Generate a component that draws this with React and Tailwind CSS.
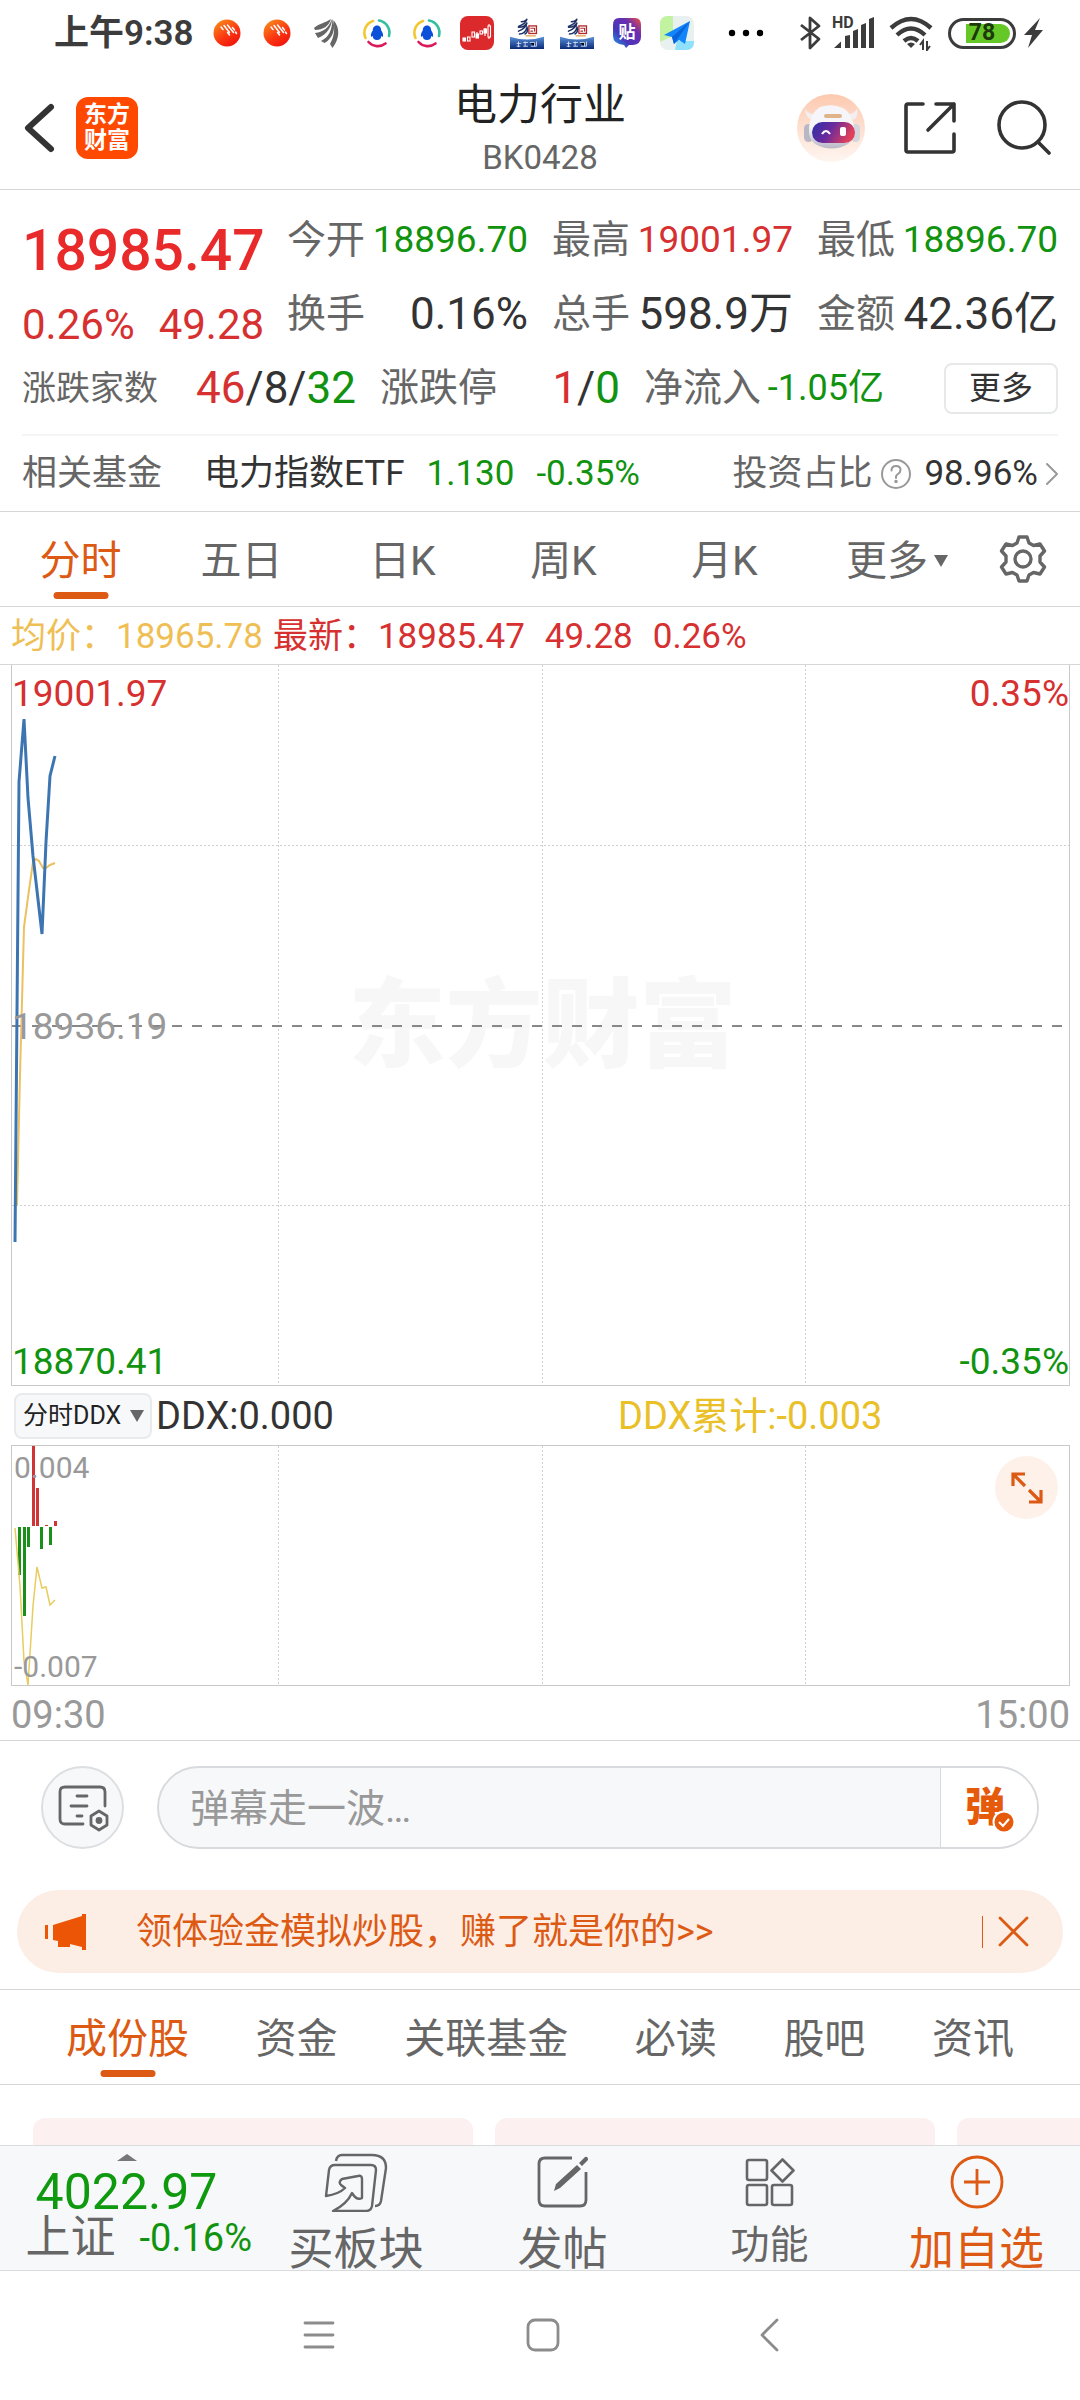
import React, { useState } from "react";

const RED = "text-[#d63031]";
const GREEN = "text-[#11930f]";

/* ---------- status bar icons ---------- */

function OrangeBall({ id }) {
  return (
    <svg viewBox="0 0 34 34" className="size-[34px]" aria-hidden="true">
      <defs>
        <linearGradient id={id} x1="0" y1="0" x2="0.7" y2="1">
          <stop offset="0" stopColor="#f79a1c" />
          <stop offset="0.6" stopColor="#fb3a12" />
          <stop offset="1" stopColor="#f0140c" />
        </linearGradient>
      </defs>
      <circle cx="17" cy="17" r="13.5" fill={`url(#${id})`} />
      <g stroke="#fff" strokeWidth="1.500" strokeLinecap="round" fill="none">
        <path d="M11 11l2 2.500M14 9.500l5.500 7M17.500 9l6 7.500M17.500 16.500l2 2.500M22.500 11.500l2 2.500M25.500 16l1 1.500" />
      </g>
    </svg>
  );
}

function WingIcon() {
  return (
    <svg viewBox="0 0 34 34" className="size-[34px]" aria-hidden="true">
      <g fill="#666">
        <path d="M4 12c6-5 11-5 17-9-2 7-8 11-16 11z" />
        <path d="M5 17c9-1 14-6 17-14C22 10 17 19 8 22z" />
        <path d="M11 25c8-4 11-11 11.500-22 4 9 0 20-8 24z" />
        <path d="M20 28c4-7 5-14 3.500-24 7 8 6 19-1 28z" />
      </g>
    </svg>
  );
}

function PenguinRing() {
  return (
    <svg viewBox="0 0 34 34" className="size-[34px]" aria-hidden="true">
      <g fill="none" strokeWidth="2.600" strokeLinecap="round">
        <path d="M5.500 22A12.500 12.500 0 0 1 13 5" stroke="#f2c832" />
        <path d="M19 4.500A12.500 12.500 0 0 1 29 20" stroke="#35bfa0" />
        <path d="M8.500 26a12.500 12.500 0 0 0 17 1.500" stroke="#dc1a5b" />
      </g>
      <path d="M17 9.500c-3 0-4.200 2.500-4.200 5-1.500 2-2.500 4.500-1.500 6.500l1.500-1c0 2.500 1.500 4 4.200 4s4.200-1.500 4.200-4l1.500 1c1-2 0-4.500-1.500-6.500 0-2.500-1.200-5-4.200-5z" fill="#0a50d8" />
    </svg>
  );
}

function CandleApp() {
  return (
    <svg viewBox="0 0 34 34" className="size-[34px]" aria-hidden="true">
      <rect width="34" height="34" rx="8" fill="#dc2a2c" />
      <g stroke="#fff" strokeWidth="1.100" fill="none">
        <rect x="3" y="22" width="2.500" height="3" fill="#fff" />
        <rect x="7.500" y="21" width="2.500" height="4" />
        <rect x="12" y="16" width="2.500" height="5" />
        <rect x="16" y="18" width="2.500" height="4" fill="#fff" />
        <rect x="20" y="15" width="2.500" height="3" />
        <rect x="24" y="13" width="2.500" height="4" fill="#fff" />
        <rect x="28" y="10" width="2.500" height="11" />
        <path d="M29 8v2M29 21v2M17 16v2M25 12v8" />
      </g>
    </svg>
  );
}

function SecuritiesApp({ id }) {
  return (
    <svg viewBox="0 0 36 34" className="h-[34px] w-[34px]" aria-hidden="true">
      <defs>
        <linearGradient id={id} x1="0" y1="0" x2="0" y2="1">
          <stop offset="0" stopColor="#5a90d8" />
          <stop offset="1" stopColor="#0b2a78" />
        </linearGradient>
      </defs>
      <path d="M0 21q18 6 36 0v13H0z" fill={`url(#${id})`} />
      <g fill="none" strokeLinecap="round">
        <path d="M12 5q5 0 6-3-1 5-9 8M9 11q7 0 9-5-1 6-9 9M10 18q6 0 8-7 2 4-2 7" stroke="#1c2f66" strokeWidth="1.600" />
        <rect x="20" y="9.500" width="8" height="8" stroke="#b02a2c" strokeWidth="1.400" />
        <path d="M22 12h4M22 15h2M26 12v3" stroke="#b02a2c" strokeWidth="1.200" />
        <path d="M17 20h10" stroke="#e0a04a" strokeWidth="1.200" />
      </g>
      <path d="M7 28h5M9 26v6M14 27h5M16 26v5M21 27h5v4M28 26v5M7 31h4M14 31h5M22 31h6" stroke="#dfe9fb" strokeWidth="0.900" />
    </svg>
  );
}

function ForumApp() {
  return (
    <svg viewBox="0 0 34 34" className="size-[34px]" aria-hidden="true">
      <defs>
        <linearGradient id="forum" x1="0" y1="1" x2="1" y2="0">
          <stop offset="0" stopColor="#18a8ef" />
          <stop offset="0.35" stopColor="#4a35b8" />
          <stop offset="0.7" stopColor="#6b2fb0" />
          <stop offset="1" stopColor="#f0503c" />
        </linearGradient>
      </defs>
      <path d="M9 2h16q6 0 6 7v12q0 7-8 8h-4l-3 3-2-3Q3 28 3 20V9q0-7 6-7z" fill="url(#forum)" />
      <text x="17" y="22" textAnchor="middle" fontSize="17" fontWeight="700" fill="#fff" className="font-['Noto_Sans_CJK_SC',sans-serif]">贴</text>
    </svg>
  );
}

function PlaneApp() {
  return (
    <svg viewBox="0 0 34 34" className="size-[34px]" aria-hidden="true">
      <rect width="34" height="34" rx="8" fill="#e8f0f0" />
      <path d="M8 0h5v20L0 26V8q0-8 8-8z" fill="#c2f3a0" />
      <path d="M17 25h17v1q0 8-8 8H15z" fill="#8fe0fb" />
      <path d="M30 5L4 19l8 2 2 7 5-4 6 4z" fill="#1186fb" />
      <path d="M30 5L12 21l2 7z" fill="#0a63d8" />
    </svg>
  );
}

function StatusBar() {
  return (
    <div className="flex h-[66px] items-center pr-9 pl-[54px] text-[#3c3c3c]">
      <span className="w-[156px] pt-0.5 text-[35px] leading-[40px] font-semibold whitespace-nowrap">上午9:38</span>
      <div className="flex items-center gap-4">
        <OrangeBall id="ball-a" />
        <OrangeBall id="ball-b" />
        <WingIcon />
        <PenguinRing />
        <PenguinRing />
        <CandleApp />
        <SecuritiesApp id="sec-a" />
        <SecuritiesApp id="sec-b" />
        <ForumApp />
        <PlaneApp />
      </div>
      <svg viewBox="0 0 36 8" className="ml-[34px] h-2 w-9" fill="#000" aria-hidden="true">
        <circle cx="4" cy="4" r="3.200" />
        <circle cx="18" cy="4" r="3.200" />
        <circle cx="32" cy="4" r="3.200" />
      </svg>
      <div className="ml-auto flex items-center">
        <svg viewBox="0 0 22 36" className="h-9 w-[22px]" fill="none" stroke="#3c3c3c" strokeWidth="2.800" strokeLinejoin="round" aria-hidden="true">
          <path d="M2 10l18 14-9 9V3l9 8L2 25" />
        </svg>
        <svg viewBox="0 -4 44 44" className="ml-[11px] h-11 w-11" fill="#3c3c3c" aria-hidden="true">
          <text x="0" y="13" fontSize="16" fontWeight="700" className="font-[Roboto,sans-serif]">HD</text>
          <path d="M2 33l7-6.500V33zM13 21l5-1v13h-5zM21 16l5-2v19h-5zM29 10l5-2v25h-5zM37 4l5-2v31h-5z" />
        </svg>
        <svg viewBox="0 0 44 36" className="ml-[13px] h-9 w-11" fill="none" stroke="#3c3c3c" strokeWidth="4.400" aria-hidden="true">
          <path d="M2 13Q22-5 42 13M8 20Q22 7 36 20M15 26Q22 20 29 26" />
          <path d="M18 29q4-3 8 0l-4 4z" fill="#3c3c3c" stroke="none" />
          <path d="M34 35v-9l-3 4M38 26v9l3-4" strokeWidth="2" />
        </svg>
        <span className="ml-[15px] flex h-[31px] w-[68px] items-center rounded-full border-[3px] border-[#3c3c3c] pr-[3px] pl-[15px]">
          <span className="flex h-[19px] flex-1 items-center justify-center rounded-l-sm rounded-r-full bg-[#66c827] pr-3 text-[23px] leading-[20px] font-bold text-[#1c3a0b]">78</span>
        </span>
        <svg viewBox="0 0 20 30" className="ml-2 h-[30px] w-5" fill="#3c3c3c" aria-hidden="true">
          <path d="M16 0L0 17h8L4 30l15-18h-8z" />
        </svg>
      </div>
    </div>
  );
}

/* ---------- header ---------- */

function Robot() {
  return (
    <svg viewBox="0 0 68 68" className="size-[68px]" aria-hidden="true">
      <defs>
        <linearGradient id="robot-bg" x1="0" y1="0" x2="0" y2="1">
          <stop offset="0" stopColor="#fdc9af" />
          <stop offset="1" stopColor="#fef6f1" />
        </linearGradient>
        <linearGradient id="robot-face" x1="0" y1="0" x2="1" y2="0.3">
          <stop offset="0" stopColor="#2b2fa8" />
          <stop offset="0.5" stopColor="#6b2a9c" />
          <stop offset="1" stopColor="#e0405c" />
        </linearGradient>
        <linearGradient id="robot-head" x1="0" y1="0" x2="0" y2="1">
          <stop offset="0.5" stopColor="#f6f5f9" />
          <stop offset="1" stopColor="#b9b8c6" />
        </linearGradient>
      </defs>
      <circle cx="34" cy="34" r="34" fill="url(#robot-bg)" />
      <path d="M8 15q0 8 7 11l4-6q-7 1-11-5zM60 14q2 9-4 12l-5-6q7 0 9-6z" fill="#f3eef0" />
      <rect x="7" y="30" width="9" height="18" rx="4.500" fill="#b8b8c4" />
      <rect x="54" y="30" width="9" height="18" rx="4.500" fill="#d5d5de" />
      <path d="M23 13q12-4 23 1 9 5 11 19 1 13-6 17-16 9-33 0-7-5-6-17 2-15 11-20z" fill="url(#robot-head)" />
      <rect x="27" y="20" width="18" height="4" rx="2" fill="#e0b48a" />
      <rect x="15" y="28" width="43" height="21" rx="10.500" fill="url(#robot-face)" />
      <path d="M25 40q4-6 8 0" stroke="#fff" strokeWidth="2.200" fill="none" />
      <rect x="43" y="33" width="6" height="9" rx="2" fill="#fff" />
    </svg>
  );
}

function Header() {
  return (
    <header className="grid h-[124px] grid-cols-[1fr_auto_1fr] items-center border-b border-[#d6d6d6] px-[26px]">
      <div className="-ml-1 flex items-center gap-[19px]">
        <button type="button" aria-label="返回">
          <svg viewBox="0 0 35 56" className="h-14 w-[35px]" fill="none" stroke="#333" strokeWidth="6" strokeLinecap="round" strokeLinejoin="round" aria-hidden="true">
            <path d="M29 7L6 28l23 21" />
          </svg>
        </button>
        <a href="#home" className="flex size-[62px] flex-col items-center justify-center rounded-xl bg-[#ff4800] text-[23px] leading-[26px] font-bold text-white">
          <span>东方</span>
          <span>财富</span>
        </a>
      </div>
      <div className="pt-[3px] text-center">
        <h1 className="text-[43px] leading-[58px] text-[#222]">电力行业</h1>
        <p className="text-[33px] leading-[48px] text-[#666]">BK0428</p>
      </div>
      <div className="flex items-center justify-end">
        <button type="button" aria-label="智能助手"><Robot /></button>
        <button type="button" aria-label="分享" className="ml-[37px]">
          <svg viewBox="0 0 56 56" className="size-14" fill="none" stroke="#333" strokeWidth="3.600" strokeLinecap="round" strokeLinejoin="round" aria-hidden="true">
            <path d="M21 4H6q-2 0-2 2v44q0 2 2 2h44q2 0 2-2V34M34 4h18v17M52 4L26 30" />
          </svg>
        </button>
        <button type="button" aria-label="搜索" className="mr-[3px] ml-[37px]">
          <svg viewBox="0 0 56 56" className="size-14" fill="none" stroke="#333" strokeWidth="3.600" strokeLinecap="round" aria-hidden="true">
            <circle cx="27" cy="25" r="23" />
            <path d="M43 42l11 11" />
          </svg>
        </button>
      </div>
    </header>
  );
}

/* ---------- quote ---------- */

function Stat({ label, value, className }) {
  return (
    <div className="flex h-[74px] items-center justify-between whitespace-nowrap">
      <dt className="text-[39px] leading-[50px] text-[#666]">{label}</dt>
      <dd className={className}>{value}</dd>
    </div>
  );
}

function Quote() {
  return (
    <section className="border-b border-[#d6d6d6] pt-[13px]">
      <div className="flex px-[22px]">
        <div className="w-[265px] whitespace-nowrap">
          <p className="flex h-24 items-center text-[57px] leading-[70px] font-medium text-[#e92a2a]">18985.47</p>
          <p className={`flex h-[52px] items-center gap-6 text-[42px] leading-[52px] ${RED}`}>
            <span>0.26%</span>
            <span>49.28</span>
          </p>
        </div>
        <dl className="grid flex-1 grid-cols-3 gap-x-6">
          <Stat label="今开" value="18896.70" className={`text-[37px] leading-[50px] ${GREEN}`} />
          <Stat label="最高" value="19001.97" className={`text-[37px] leading-[50px] ${RED}`} />
          <Stat label="最低" value="18896.70" className={`text-[37px] leading-[50px] ${GREEN}`} />
          <Stat label="换手" value="0.16%" className="text-[44px] leading-[50px] text-[#333]" />
          <Stat label="总手" value="598.9万" className="text-[44px] leading-[50px] text-[#333]" />
          <Stat label="金额" value="42.36亿" className="text-[44px] leading-[50px] text-[#333]" />
        </dl>
      </div>
      <div className="grid h-[74px] grid-cols-[334fr_240fr_240fr_150fr] items-center gap-x-6 px-[22px] leading-[50px] whitespace-nowrap">
        <div className="flex items-center justify-between">
          <span className="text-[34px] text-[#666]">涨跌家数</span>
          <span className="text-[44px] text-[#333]">
            <span className={RED}>46</span>/8/<span className={GREEN}>32</span>
          </span>
        </div>
        <div className="flex items-center justify-between">
          <span className="text-[39px] text-[#666]">涨跌停</span>
          <span className="text-[44px] text-[#333]">
            <span className={RED}>1</span>/<span className={GREEN}>0</span>
          </span>
        </div>
        <div className="flex items-center justify-between">
          <span className="text-[39px] text-[#666]">净流入</span>
          <span className={`text-[36px] ${GREEN}`}>-1.05亿</span>
        </div>
        <button type="button" className="h-[51px] w-[114px] justify-self-end rounded-lg border-2 border-[#e6e8ea] text-[32px] leading-[44px] text-[#333]">更多</button>
      </div>
      <div className="mx-[22px] mt-[9px] flex h-[77px] items-center border-t-2 border-[#f5f5f5] text-[35px] leading-[50px] whitespace-nowrap">
        <span className="text-[#666]">相关基金</span>
        <a href="#etf" className="ml-[42px] flex items-center">
          <span className="text-[#333]">电力指数ETF</span>
          <span className={`ml-[22px] ${GREEN}`}>1.130</span>
          <span className={`ml-[22px] ${GREEN}`}>-0.35%</span>
        </a>
        <span className="ml-auto text-[#666]">投资占比</span>
        <svg viewBox="0 0 32 32" className="ml-2 size-8" fill="none" stroke="#999" strokeWidth="2" strokeLinecap="round" aria-hidden="true">
          <circle cx="16" cy="16" r="14" />
          <path d="M11.500 12.500q0-4.500 4.500-4.500t4.500 4q0 2.500-2.500 4t-2 4" />
          <circle cx="16" cy="23.500" r="0.800" fill="#999" />
        </svg>
        <a href="#ratio" className="ml-3 flex items-center text-[#333]">
          98.96%
          <svg viewBox="0 0 12 24" className="ml-2 h-6 w-3" fill="none" stroke="#999" strokeWidth="2" strokeLinecap="round" strokeLinejoin="round" aria-hidden="true">
            <path d="M1 2l10 10L1 22" />
          </svg>
        </a>
      </div>
    </section>
  );
}

/* ---------- chart period tabs ---------- */

const PERIODS = ["分时", "五日", "日K", "周K", "月K"];

function PeriodTabs() {
  const [active, setActive] = useState("分时");
  return (
    <nav className="grid h-[95px] grid-cols-[161fr_161fr_161fr_161fr_161fr_184fr_68fr] border-b border-[#d6d6d6] pr-[23px] text-[41px] leading-[50px] text-[#666]">
      {PERIODS.map((p) => (
        <button
          key={p}
          type="button"
          onClick={() => setActive(p)}
          className={p === active ? "relative pt-[3px] text-[#dc5a14]" : "relative pt-[3px]"}
        >
          {p}
          {p === active && <span className="absolute bottom-[7px] left-1/2 h-[7px] w-[55px] -translate-x-1/2 rounded-full bg-[#dc5a14]" />}
        </button>
      ))}
      <button type="button" className="flex items-center justify-center gap-1.5 pt-[3px] whitespace-nowrap">
        更多
        <svg viewBox="0 0 14 12" className="h-3 w-3.5" fill="#666" aria-hidden="true"><path d="M0 0h14L7 12z" /></svg>
      </button>
      <button type="button" aria-label="设置" className="flex items-center justify-center">
        <svg viewBox="0 0 48 50" className="h-[50px] w-12" fill="none" stroke="#666" strokeWidth="3.400" strokeLinejoin="round" aria-hidden="true">
          <path d="M20 3h8l2 6 4.500 2.500L41 10l4.500 7-4.500 5v6l4.500 5-4.500 7-6.500-1.500L30 41l-2 6h-8l-2-6-4.500-2.500L7 40l-4.500-7L7 28v-6l-4.500-5L7 10l6.500 1.500L18 9z" />
          <circle cx="24" cy="25" r="8" />
        </svg>
      </button>
    </nav>
  );
}

/* ---------- charts ---------- */

function Grid({ height, rows }) {
  return (
    <g stroke="#cfcfcf" strokeWidth="1" strokeDasharray="2 2">
      {[266, 530, 793].map((x) => <path key={x} d={`M${x}.5 0V${height}`} />)}
      {rows.map((y) => <path key={y} d={`M0 ${y}.5H1057`} />)}
    </g>
  );
}

function PriceChart() {
  return (
    <div className="relative mr-2.5 ml-[11px] h-[721px] border-x border-b border-[#c9c9c9] text-[37px] leading-[44px]">
      <span className="absolute top-[311px] left-1/2 -translate-x-1/2 pl-1 text-[97px] leading-[100px] font-black whitespace-nowrap text-[#f7f7f7]">东方财富</span>
      <svg viewBox="0 0 1057 720" preserveAspectRatio="none" className="absolute inset-0 size-full" fill="none" aria-hidden="true">
        <Grid height={720} rows={[180, 540]} />
        <path d="M0 361H1057" stroke="#888" strokeWidth="2" strokeDasharray="10 10" />
        <path d="M5 540L8 410 12 262 17 225 21 197 24 194 27 196 31 203 34 203 38 200 43 198" stroke="#ecc15f" strokeWidth="2" />
        <path d="M3 577L7 117 12 54 16 133 21 191 30 269 34 177 38 111 43 91" stroke="#3d75b2" strokeWidth="3" strokeLinejoin="miter" />
      </svg>
      <span className={`absolute top-[7px] left-0 ${RED}`}>19001.97</span>
      <span className={`absolute top-[7px] right-0 ${RED}`}>0.35%</span>
      <span className="absolute top-[340px] left-0 text-[#999]">18936.19</span>
      <span className={`absolute bottom-px left-0 ${GREEN}`}>18870.41</span>
      <span className={`absolute right-0 bottom-px ${GREEN}`}>-0.35%</span>
    </div>
  );
}

const DDX_BARS = [
  [6, 81, 129, "#1a8f1a"],
  [11, 81, 170, "#1a8f1a"],
  [15, 81, 101, "#1a8f1a"],
  [20, 0, 80, "#d03434"],
  [24, 42, 80, "#d03434"],
  [28, 81, 103, "#1a8f1a"],
  [33, 79, 80, "#d03434"],
  [37, 81, 99, "#1a8f1a"],
  [42, 75, 80, "#d03434"],
];

function DdxChart() {
  return (
    <div className="relative mr-2.5 ml-[11px] h-[241px] border border-[#c9c9c9] text-[30px] leading-[36px] text-[#999]">
      <svg viewBox="0 0 1057 239" preserveAspectRatio="none" className="absolute inset-0 size-full" fill="none" aria-hidden="true">
        <Grid height={239} rows={[]} />
        {DDX_BARS.map(([x, top, bottom, color]) => (
          <rect key={x} x={x} y={top} width="3" height={bottom - top} fill={color} />
        ))}
        <path d="M3 82L8 140 12 215 16 239 21 160 25 121 30 142 34 141 38 159 43 154" stroke="#e8cc5e" strokeWidth="1.500" />
      </svg>
      <span className="absolute top-1 left-0.5">0.004</span>
      <span className="absolute bottom-0 left-0.5">-0.007</span>
      <button type="button" aria-label="全屏" className="absolute top-2.5 right-[11px] flex size-[63px] items-center justify-center rounded-full bg-[#fef1ea]">
        <svg viewBox="0 0 32 32" className="size-8" fill="none" stroke="#dc5a14" strokeWidth="3.200" aria-hidden="true">
          <path d="M2 14V2h12M2 2l12 12M30 18v12H18M30 30L18 18" />
        </svg>
      </button>
    </div>
  );
}

/* ---------- comment bar and banner ---------- */

function CommentBar() {
  return (
    <div className="flex gap-[33px] px-[41px] pt-[25px]">
      <button type="button" aria-label="弹幕设置" className="flex size-[83px] items-center justify-center rounded-full border-2 border-[#dcdfe2] bg-[#f7f8fa]">
        <svg viewBox="0 0 52 50" className="h-[50px] w-[52px]" fill="none" stroke="#666" strokeWidth="2.800" strokeLinecap="round" strokeLinejoin="round" aria-hidden="true">
          <path d="M26 41H8q-5 0-5-5V9q0-5 5-5h35q5 0 5 5v14M20 13h10M14 23h16M20 33h5" />
          <path d="M42 28l8 5v9l-8 5-8-5v-9z" />
          <circle cx="42" cy="37.500" r="2" fill="#666" />
        </svg>
      </button>
      <div className="flex h-[83px] flex-1 overflow-hidden rounded-full border-2 border-[#d8dadd] bg-[#f7f8fa]">
        <input type="text" aria-label="弹幕" placeholder="弹幕走一波…" className="min-w-0 flex-1 bg-transparent pt-[3px] pl-[31px] text-[39px] leading-[50px] text-[#333] outline-none placeholder:text-[#999]" />
        <button type="button" aria-label="弹幕开关" className="relative w-[97px] border-l border-[#d8dadd] bg-white pr-2 text-[40px] leading-[50px] font-black text-[#e65a0c]">
          弹
          <svg viewBox="0 0 24 24" className="absolute top-[42px] left-[51px] size-6" aria-hidden="true">
            <circle cx="12" cy="12" r="10.500" fill="#e65a0c" stroke="#fff" strokeWidth="2" />
            <path d="M7 12l4 4 6-7" fill="none" stroke="#fff" strokeWidth="2.200" />
          </svg>
        </button>
      </div>
    </div>
  );
}

function Banner() {
  return (
    <div className="mx-[17px] mt-[41px] flex h-[83px] items-center rounded-full bg-[#fceee5] pr-[33px] pl-[27px] text-[#dc5a14]">
      <svg viewBox="0 0 44 38" className="h-[38px] w-11 shrink-0" fill="#eb5505" aria-hidden="true">
        <path d="M1 12h3v14H1zM9 12L38 3V1h4v36h-4v-3l-12-3v3H14v-6l-5-1z" />
      </svg>
      <a href="#promo" className="ml-12 text-[36px] leading-[50px] whitespace-nowrap">领体验金模拟炒股，赚了就是你的&gt;&gt;</a>
      <span className="ml-auto h-8 w-px bg-[#dc5a14]" />
      <button type="button" aria-label="关闭" className="ml-[15px]">
        <svg viewBox="0 0 32 32" className="size-8" fill="none" stroke="#dc5a14" strokeWidth="2.800" strokeLinecap="round" aria-hidden="true">
          <path d="M2 2l27 27M29 2L2 29" />
        </svg>
      </button>
    </div>
  );
}

const SECTIONS = ["成份股", "资金", "关联基金", "必读", "股吧", "资讯"];

function SectionTabs() {
  const [active, setActive] = useState("成份股");
  return (
    <nav className="mt-4 flex h-24 justify-between border-y border-[#d6d6d6] px-[66px] text-[41px] leading-[50px] text-[#666]">
      {SECTIONS.map((s) => (
        <button
          key={s}
          type="button"
          onClick={() => setActive(s)}
          className={s === active ? "relative pt-[3px] whitespace-nowrap text-[#dc5a14]" : "relative pt-[3px] whitespace-nowrap"}
        >
          {s}
          {s === active && <span className="absolute bottom-[7px] left-1/2 h-[7px] w-[55px] -translate-x-1/2 rounded-full bg-[#dc5a14]" />}
        </button>
      ))}
    </nav>
  );
}

/* ---------- bottom bar ---------- */

function BuyIcon() {
  return (
    <svg viewBox="0 0 64 60" className="h-[60px] w-16" fill="none" stroke="#666" strokeWidth="2.400" strokeLinejoin="round" aria-hidden="true">
      <path d="M12 9q1-6 6-6h30q14 0 14 13l-5 33q-1 5-6 5" />
      <path d="M2 44L5 18q1-5 6-5h36q5 0 5 5l-4 36q-1 5-6 5H9q14-7 19-18 5 8 10 5V27q0-4-4-3l-16 3q-4 3-1 6l4 3q-6 6-19 8z" />
    </svg>
  );
}

function PostIcon() {
  return (
    <svg viewBox="0 0 52 52" className="size-[52px]" fill="none" stroke="#666" strokeWidth="2.800" aria-hidden="true">
      <path d="M35 2H8Q2 2 2 8v36q0 6 6 6h35q6 0 6-6V16" />
      <path d="M42 7l6-6q3-1 3 3l-6 6zM40 9l4 4-21 19-6 3 2-7z" fill="#666" stroke="none" />
    </svg>
  );
}

function FunctionsIcon() {
  return (
    <svg viewBox="0 0 50 50" className="size-[50px]" fill="none" stroke="#666" strokeWidth="2.600" strokeLinejoin="round" aria-hidden="true">
      <rect x="2" y="3" width="20" height="20" rx="2" />
      <rect x="2" y="28" width="20" height="20" rx="2" />
      <rect x="27" y="28" width="20" height="20" rx="2" />
      <path d="M37.500 2.500l11 11-11 11-11-11z" />
    </svg>
  );
}

function AddIcon() {
  return (
    <svg viewBox="0 0 54 54" className="size-[54px]" fill="none" stroke="#dc5a14" strokeWidth="2.800" aria-hidden="true">
      <circle cx="27" cy="27" r="25" />
      <path d="M27 14v26M14 27h26" />
    </svg>
  );
}

function Action({ icon, label, className }) {
  return (
    <button type="button" className="flex flex-col items-center pt-1.5 whitespace-nowrap">
      <span className="flex h-[60px] items-center">{icon}</span>
      <span className={className}>{label}</span>
    </button>
  );
}

function BottomBar() {
  return (
    <div className="grid h-[126px] grid-cols-[253fr_206fr_207fr_207fr_207fr] border-y border-[#d9dbdd] bg-[#f7f8fa] text-[#666]">
      <a href="#index" className="flex flex-col items-center pt-2 whitespace-nowrap">
        <svg viewBox="0 0 20 7" className="h-[7px] w-5" fill="#777" aria-hidden="true"><path d="M10 0l10 7H0z" /></svg>
        <span className="mt-2 text-[50px] leading-[46px] text-[#0f990f]">4022.97</span>
        <span className="flex items-center gap-6 self-end pr-px leading-[46px]">
          <span className="text-[45px]">上证</span>
          <span className={`text-[38px] ${GREEN}`}>-0.16%</span>
        </span>
      </a>
      <Action icon={<BuyIcon />} label="买板块" className="mt-[15px] text-[45px] leading-[45px]" />
      <Action icon={<PostIcon />} label="发帖" className="mt-[15px] text-[45px] leading-[45px]" />
      <Action icon={<FunctionsIcon />} label="功能" className="mt-[11px] text-[39px] leading-[45px]" />
      <Action icon={<AddIcon />} label="加自选" className="mt-[15px] text-[45px] leading-[45px] text-[#dc5a14]" />
    </div>
  );
}

function SystemNav() {
  return (
    <div className="flex h-[129px] items-center justify-center gap-[191px] pb-0.5 pl-2">
      <button type="button" aria-label="最近任务">
        <svg viewBox="0 0 32 34" className="h-[34px] w-8" stroke="#8c8c8c" strokeWidth="2.800" strokeLinecap="round" aria-hidden="true">
          <path d="M2 5h28M2 17h28M2 29h28" />
        </svg>
      </button>
      <button type="button" aria-label="主页">
        <svg viewBox="0 0 34 34" className="size-[34px]" fill="none" stroke="#8c8c8c" strokeWidth="2.800" aria-hidden="true">
          <rect x="2" y="2" width="30" height="30" rx="7" />
        </svg>
      </button>
      <button type="button" aria-label="返回上一页">
        <svg viewBox="0 0 34 34" className="size-[34px]" fill="none" stroke="#8c8c8c" strokeWidth="2.800" strokeLinecap="round" strokeLinejoin="round" aria-hidden="true">
          <path d="M26 2L11 17l15 15" />
        </svg>
      </button>
    </div>
  );
}

export default function App() {
  return (
    <main lang="zh-CN" className="min-h-screen overflow-hidden bg-white font-[Roboto,'Noto_Sans_CJK_SC',sans-serif]">
      <StatusBar />
      <Header />
      <Quote />
      <PeriodTabs />
      <div className="flex h-[58px] items-center border-b border-[#d6d6d6] pt-0.5 pl-[11px] text-[35px] leading-[50px] whitespace-nowrap">
        <span className="text-[#efbf55]">均价：18965.78</span>
        <span className={`ml-2.5 flex gap-5 ${RED}`}>
          <span>最新：18985.47</span>
          <span>49.28</span>
          <span>0.26%</span>
        </span>
      </div>
      <PriceChart />
      <div className="flex h-[59px] items-center pl-3.5 whitespace-nowrap">
        <div className="relative">
          <select aria-label="指标" className="block h-[46px] w-[138px] appearance-none rounded-lg border-2 border-[#e8eaed] bg-[#f7f8fa] pl-[7px] text-[25px] leading-[40px] text-[#222]">
            <option>分时DDX</option>
          </select>
          <svg viewBox="0 0 14 12" className="pointer-events-none absolute top-[17px] right-2 h-3 w-3.5" fill="#666" aria-hidden="true"><path d="M0 0h14L7 12z" /></svg>
        </div>
        <div className="grid flex-1 grid-cols-2 pl-1 text-[38px] leading-[50px]">
          <span className="text-[#333]">DDX:0.000</span>
          <span className="text-[#e9c028]">DDX累计:-0.003</span>
        </div>
      </div>
      <DdxChart />
      <div className="flex h-[55px] items-center justify-between border-b border-[#d6d6d6] pt-[3px] pr-2.5 pl-[11px] text-[38px] leading-[50px] text-[#999]">
        <span>09:30</span>
        <span>15:00</span>
      </div>
      <CommentBar />
      <Banner />
      <SectionTabs />
      <div className="grid grid-cols-[440fr_440fr_123fr] gap-[22px] pt-[33px] pl-[33px]">
        <div className="h-[27px] rounded-t-xl bg-[#fdf0f0]" />
        <div className="h-[27px] rounded-t-xl bg-[#fdf0f0]" />
        <div className="h-[27px] rounded-tl-xl bg-[#fdf0f0]" />
      </div>
      <BottomBar />
      <SystemNav />
    </main>
  );
}
